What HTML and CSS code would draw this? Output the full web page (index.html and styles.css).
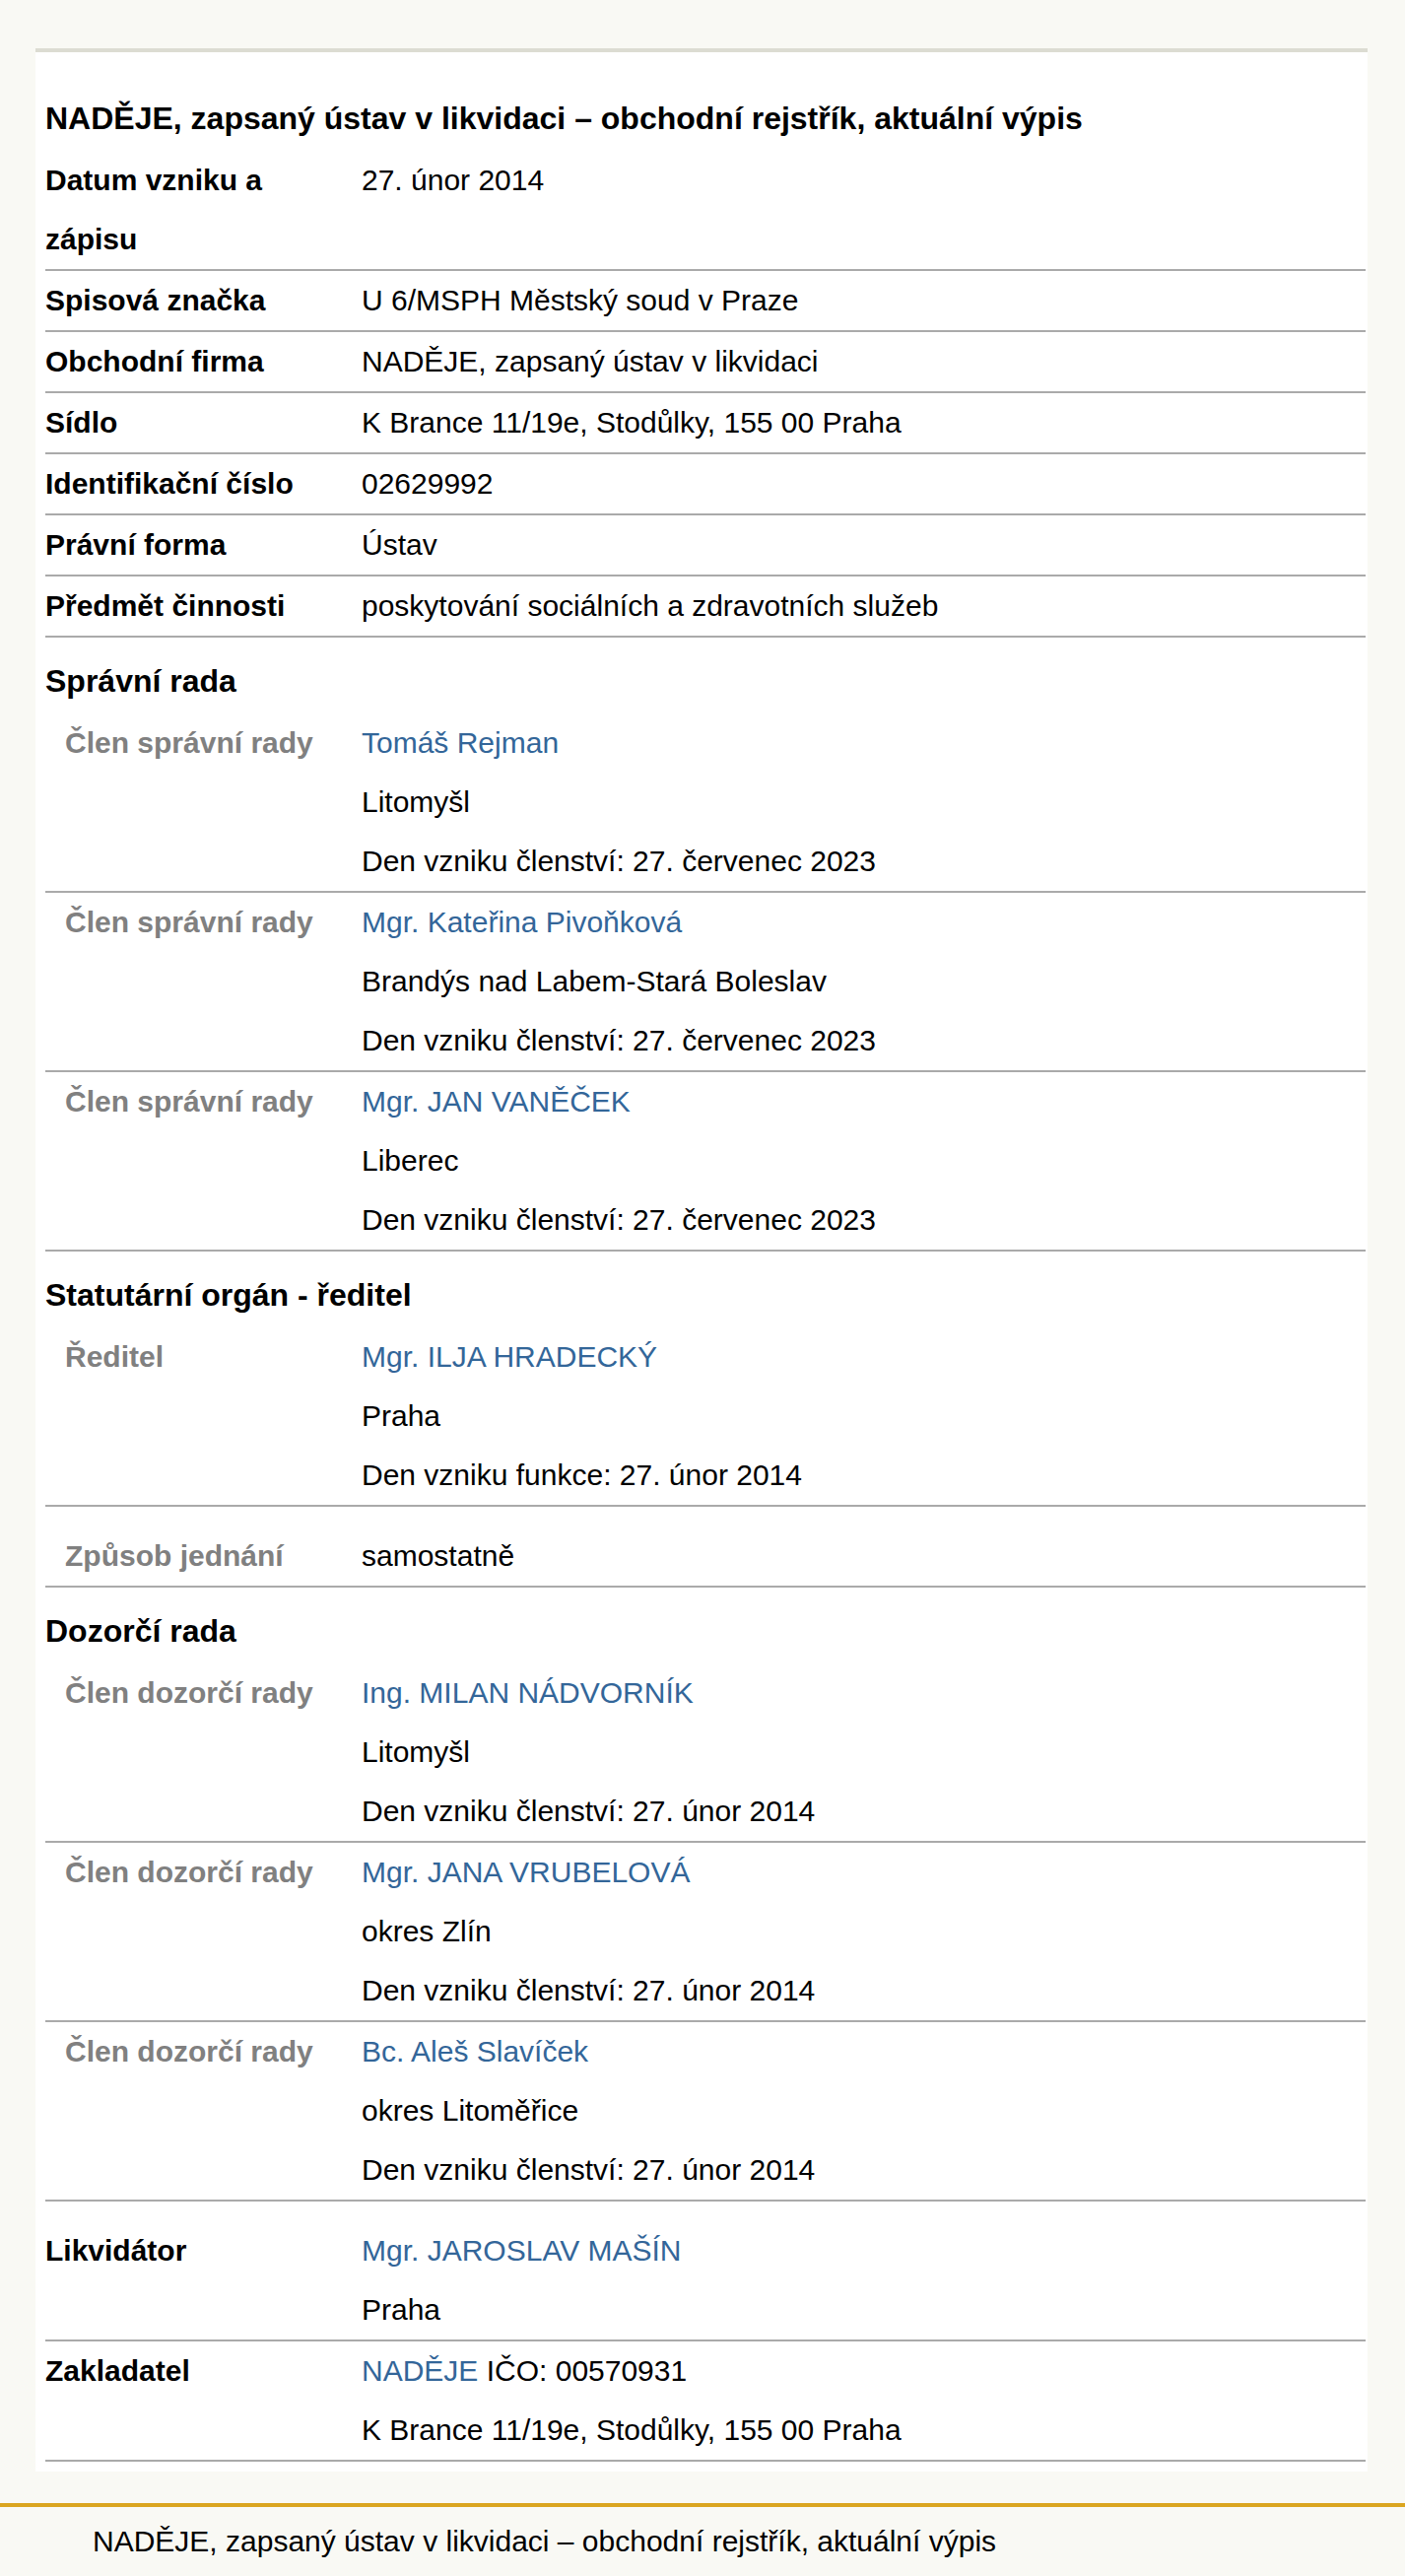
FILE: index.html
```html
<!DOCTYPE html>
<html lang="cs">
<head>
<meta charset="utf-8">
<title>NADĚJE, zapsaný ústav v likvidaci – obchodní rejstřík, aktuální výpis</title>
<link rel="stylesheet" href="styles.css">
</head>
<body>
<main class="page">
  <section class="card">
    <h1 class="title">NADĚJE, zapsaný ústav v likvidaci – obchodní rejstřík, aktuální výpis</h1>

    <div class="row">
      <div class="label">Datum vzniku a zápisu</div>
      <div class="value">27. únor 2014</div>
    </div>
    <div class="row">
      <div class="label">Spisová značka</div>
      <div class="value">U 6/MSPH Městský soud v Praze</div>
    </div>
    <div class="row">
      <div class="label">Obchodní firma</div>
      <div class="value">NADĚJE, zapsaný ústav v likvidaci</div>
    </div>
    <div class="row">
      <div class="label">Sídlo</div>
      <div class="value">K Brance 11/19e, Stodůlky, 155 00 Praha</div>
    </div>
    <div class="row">
      <div class="label">Identifikační číslo</div>
      <div class="value">02629992</div>
    </div>
    <div class="row">
      <div class="label">Právní forma</div>
      <div class="value">Ústav</div>
    </div>
    <div class="row">
      <div class="label">Předmět činnosti</div>
      <div class="value">poskytování sociálních a zdravotních služeb</div>
    </div>

    <h2 class="section">Správní rada</h2>
    <div class="row">
      <div class="label sub">Člen správní rady</div>
      <div class="value">
        <a class="link" href="#">Tomáš Rejman</a>
        <div>Litomyšl</div>
        <div>Den vzniku členství: 27. červenec 2023</div>
      </div>
    </div>
    <div class="row">
      <div class="label sub">Člen správní rady</div>
      <div class="value">
        <a class="link" href="#">Mgr. Kateřina Pivoňková</a>
        <div>Brandýs nad Labem-Stará Boleslav</div>
        <div>Den vzniku členství: 27. červenec 2023</div>
      </div>
    </div>
    <div class="row">
      <div class="label sub">Člen správní rady</div>
      <div class="value">
        <a class="link" href="#">Mgr. JAN VANĚČEK</a>
        <div>Liberec</div>
        <div>Den vzniku členství: 27. červenec 2023</div>
      </div>
    </div>

    <h2 class="section">Statutární orgán - ředitel</h2>
    <div class="row">
      <div class="label sub">Ředitel</div>
      <div class="value">
        <a class="link" href="#">Mgr. ILJA HRADECKÝ</a>
        <div>Praha</div>
        <div>Den vzniku funkce: 27. únor 2014</div>
      </div>
    </div>
    <div class="row spaced">
      <div class="label sub">Způsob jednání</div>
      <div class="value">samostatně</div>
    </div>

    <h2 class="section">Dozorčí rada</h2>
    <div class="row">
      <div class="label sub">Člen dozorčí rady</div>
      <div class="value">
        <a class="link" href="#">Ing. MILAN NÁDVORNÍK</a>
        <div>Litomyšl</div>
        <div>Den vzniku členství: 27. únor 2014</div>
      </div>
    </div>
    <div class="row">
      <div class="label sub">Člen dozorčí rady</div>
      <div class="value">
        <a class="link" href="#">Mgr. JANA VRUBELOVÁ</a>
        <div>okres Zlín</div>
        <div>Den vzniku členství: 27. únor 2014</div>
      </div>
    </div>
    <div class="row">
      <div class="label sub">Člen dozorčí rady</div>
      <div class="value">
        <a class="link" href="#">Bc. Aleš Slavíček</a>
        <div>okres Litoměřice</div>
        <div>Den vzniku členství: 27. únor 2014</div>
      </div>
    </div>

    <div class="row spaced">
      <div class="label">Likvidátor</div>
      <div class="value">
        <a class="link" href="#">Mgr. JAROSLAV MAŠÍN</a>
        <div>Praha</div>
      </div>
    </div>
    <div class="row">
      <div class="label">Zakladatel</div>
      <div class="value">
        <div><a class="link inline" href="#">NADĚJE</a> IČO: 00570931</div>
        <div>K Brance 11/19e, Stodůlky, 155 00 Praha</div>
      </div>
    </div>
  </section>
</main>
<footer class="footer">NADĚJE, zapsaný ústav v likvidaci – obchodní rejstřík, aktuální výpis</footer>
</body>
</html>
```

FILE: styles.css
```css
html, body {
  margin: 0;
  padding: 0;
}

body {
  background: #f9f9f4;
  color: #000;
  font-family: "Liberation Sans", Arial, sans-serif;
  font-size: 30px;
  line-height: 60px;
}

.page {
  padding: 49px 0 0 36px;
}

.card {
  width: 1352px;
  box-sizing: border-box;
  background: #fff;
  border-top: 4px solid #dcdcd2;
  padding: 23px 2px 10px 10px;
}

.title,
.section {
  margin: 0;
  padding-top: 12px;
  font-size: 32px;
  font-weight: bold;
  line-height: 65px;
}

.row {
  display: grid;
  grid-template-columns: 321px 1fr;
  border-bottom: 2px solid #aaaaaa;
}

.row.spaced {
  padding-top: 20px;
}

.label {
  font-weight: bold;
  padding-right: 20px;
}

.label.sub {
  color: #808080;
  padding-left: 20px;
}

.value {
  display: flex;
  flex-direction: column;
}

.link {
  color: #336699;
  text-decoration: none;
}

.link.inline {
  display: inline;
}

.footer {
  margin-top: 32px;
  border-top: 4px solid #daa520;
  padding: 5px 0 0 94px;
  height: 64px;
  box-sizing: border-box;
}
```
